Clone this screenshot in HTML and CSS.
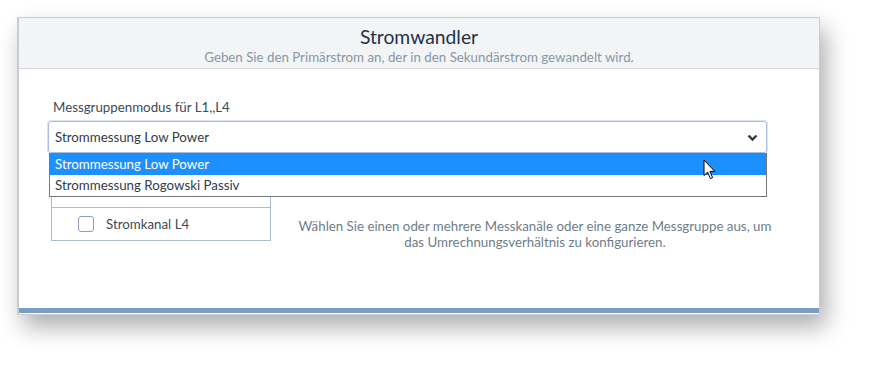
FILE: index.html
```html
<!DOCTYPE html>
<html lang="de">
<head>
<meta charset="utf-8">
<title>Stromwandler</title>
<link rel="stylesheet" href="styles.css">
</head>
<body>
<div class="panel">
  <div class="header">
    <div class="title">Stromwandler</div>
    <div class="subtitle">Geben Sie den Primärstrom an, der in den Sekundärstrom gewandelt wird.</div>
  </div>
  <div class="content">
    <div class="field">
      <div class="label">Messgruppenmodus für L1,,L4</div>
      <div class="select">
        <span>Strommessung Low Power</span>
        <svg class="chev" width="11" height="8" viewBox="0 0 11 8"><path d="M1.5 1.5 L5.5 5.5 L9.5 1.5" fill="none" stroke="#2b3a4a" stroke-width="2.4"/></svg>
      </div>
      <div class="dropdown">
        <div class="opt sel">Strommessung Low Power</div>
        <div class="opt">Strommessung Rogowski Passiv</div>
        <svg class="cursor" width="14" height="22" viewBox="0 0 14 22"><path d="M1 1 L1 16.5 L4.6 13.2 L7.4 19.6 L9.6 18.6 L6.9 12.4 L11.8 12.4 Z" fill="#fff" stroke="#000" stroke-width="1" stroke-linejoin="round"/></svg>
      </div>
    </div>
    <div class="row">
      <div class="list">
        <div class="item spacer"></div>
        <div class="item"><span class="box"></span><span>Stromkanal L4</span></div>
      </div>
      <div class="help">Wählen Sie einen oder mehrere Messkanäle oder eine ganze Messgruppe aus, um das Umrechnungsverhältnis zu konfigurieren.</div>
    </div>
  </div>
  <div class="bar"></div>
</div>
</body>
</html>
```
FILE: styles.css
```css
html, body {
  margin: 0;
  padding: 0;
  background: #fff;
}
body {
  font-family: "Lato", "Noto Sans", sans-serif;
  color: #34495e;
  width: 870px;
  height: 365px;
  overflow: hidden;
}
.panel {
  margin: 17px 0 0 17px;
  width: 803px;
  height: 298px;
  box-sizing: border-box;
  border: 1px solid #c9ccd0;
  border-left: 2px solid #c9ccd0;
  background: #fff;
  display: flex;
  flex-direction: column;
  box-shadow: 6px 12px 22px rgba(0, 0, 0, 0.32);
}
.header {
  background: #f3f4f6;
  border-bottom: 1px solid #d4d7db;
  height: 51px;
  box-sizing: border-box;
  text-align: center;
  padding-top: 7px;
}
.title {
  font-size: 19.3px;
  line-height: 24px;
  color: #1f3246;
}
.subtitle {
  font-size: 13.3px;
  line-height: 16px;
  color: #8797a7;
}
.content {
  flex: 1;
  padding: 30px 52px 0 29px;
}
.field {
  position: relative;
}
.label {
  font-size: 13.3px;
  line-height: 16px;
  color: #3b4a5a;
  padding-left: 5px;
  margin-bottom: 6px;
}
.select {
  height: 32px;
  box-sizing: border-box;
  border: 1px solid #a9c0dc;
  border-radius: 3px;
  box-shadow: 0 0 0 1px rgba(169, 192, 220, 0.45);
  display: flex;
  align-items: center;
  justify-content: space-between;
  padding: 0 8px 0 6px;
  font-size: 13.3px;
  color: #2f3d4c;
}
.chev {
  margin-top: 1px;
}
.dropdown {
  position: absolute;
  left: 1px;
  right: 0;
  top: 54px;
  background: #fff;
  border: 1px solid #777;
  z-index: 2;
  font-size: 13.3px;
}
.opt {
  height: 21px;
  line-height: 21px;
  padding-left: 5px;
  color: #2f3d4c;
}
.opt.sel {
  background: #1e8ffe;
  color: #fff;
}
.cursor {
  position: absolute;
  left: 653px;
  top: 5px;
}
.row {
  display: grid;
  grid-template-columns: 220px 1fr;
  margin-top: 21px;
  padding-left: 3px;
  margin-right: -14px;
}
.list {
  border: 1px solid #a9bcd2;
  border-top: none;
}
.item {
  height: 33px;
  box-sizing: border-box;
  border-top: 1px solid #a9bcd2;
  display: flex;
  align-items: center;
  padding-left: 26px;
  font-size: 13.3px;
  color: #3b4a5a;
}
.item.spacer {
  border-top: none;
}
.box {
  width: 14px;
  height: 14px;
  border: 1px solid #8aa0ba;
  border-radius: 3px;
  margin-right: 12px;
}
.help {
  align-self: end;
  text-align: center;
  font-size: 13.3px;
  line-height: 16px;
  color: #6e7d8b;
  padding: 0 0 0 18px;
  margin-bottom: -9px;
}
.bar {
  height: 5px;
  background: #7a9bc4;
  margin-bottom: 1px;
}
```
